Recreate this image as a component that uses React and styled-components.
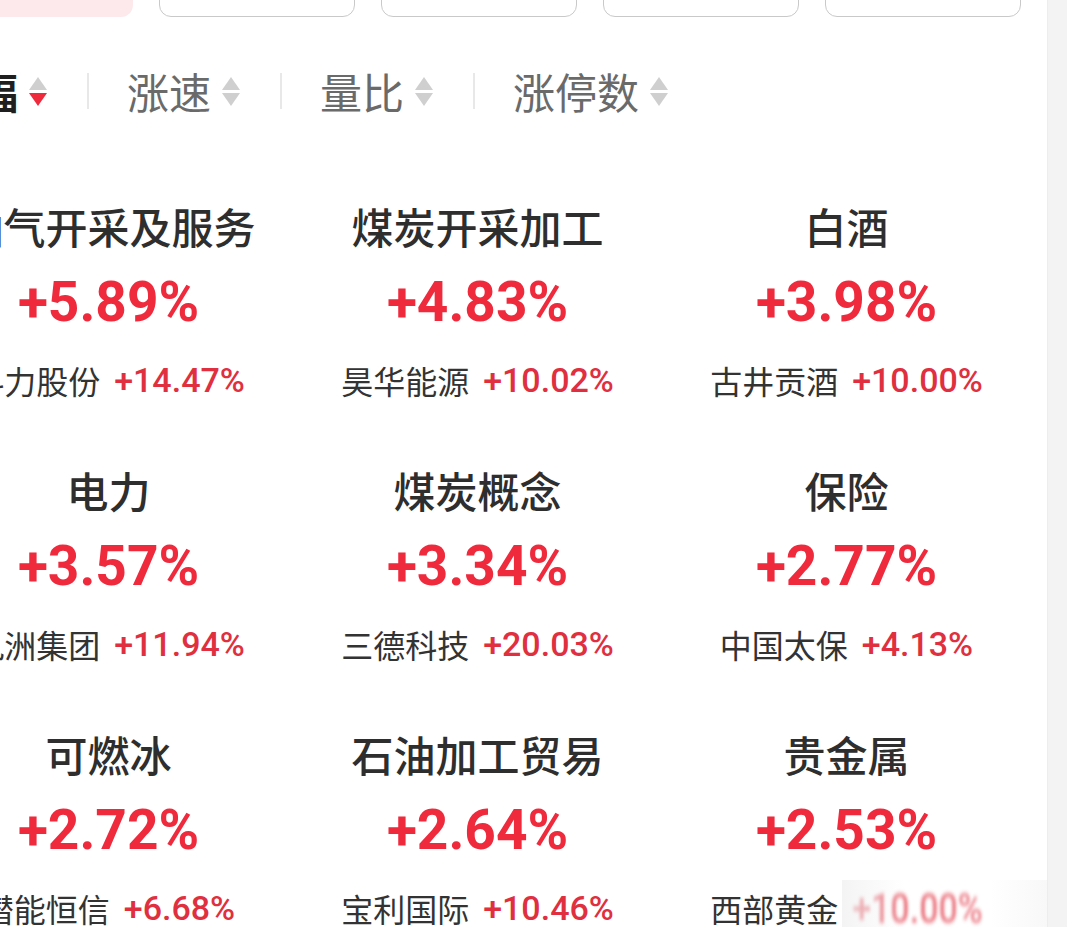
import React from 'react';
import styled, { createGlobalStyle, css } from 'styled-components';

const GlobalStyle = createGlobalStyle`
  html, body {
    margin: 0;
    padding: 0;
    background: #ffffff;
    overflow: hidden;
  }

  body {
    font-family: Roboto, "Noto Sans CJK SC", sans-serif;
    -webkit-font-smoothing: antialiased;
  }
`;

const Screen = styled.div`
  width: 1067px;
  height: 927px;
  display: flex;
  overflow: hidden;
`;

const Viewport = styled.div`
  flex: 1;
  overflow: hidden;
`;

const Scrollbar = styled.div`
  width: 19px;
  background: #f3f3f3;
  border-left: 1px solid #ededed;
`;

const Panel = styled.div`
  width: 1138px;
  margin-left: -90px;
`;

const ChipRow = styled.div`
  display: flex;
  gap: 26px;
  padding: 0 27px;
  margin-top: -40px;
`;

const Chip = styled.div`
  width: 196px;
  height: 57px;
  box-sizing: border-box;
  border-radius: 12px;
  border: 1.5px solid #c9c9c9;
  background: #ffffff;

  ${({ $active }) =>
    $active &&
    css`
      border-color: transparent;
      background: #fde9eb;
    `}
`;

const SortBar = styled.div`
  display: flex;
  align-items: center;
  height: 60px;
  margin-top: 44px;
  padding-left: 24px;
`;

const SortItem = styled.div`
  display: flex;
  align-items: center;
  gap: 11px;
`;

const SortLabel = styled.span`
  font-family: "Noto Sans CJK SC", sans-serif;
  font-size: 42px;
  line-height: 60px;
  color: ${({ $active }) => ($active ? '#1f1f1f' : '#6a6a6a')};
  font-weight: ${({ $active }) => ($active ? 700 : 400)};
`;

const Divider = styled.span`
  width: 2px;
  height: 36px;
  background: #e8e8e8;
  margin: 0 38px 0 40px;
`;

const ArrowStack = styled.span`
  display: flex;
  flex-direction: column;
  gap: 3px;
`;

const Grid = styled.div`
  display: grid;
  grid-template-columns: repeat(3, 369px);
  row-gap: 62px;
  padding: 0 14px;
  margin-top: 79px;
`;

const Card = styled.div`
  display: flex;
  flex-direction: column;
  align-items: center;
`;

const SectorName = styled.div`
  font-family: "Noto Sans CJK SC", sans-serif;
  font-size: 42px;
  line-height: 52px;
  font-weight: 500;
  color: #2e2e2e;
  white-space: nowrap;
`;

const SectorChange = styled.div`
  margin-top: 18px;
  font-family: Roboto, sans-serif;
  font-size: 55px;
  line-height: 64px;
  font-weight: 700;
  color: #ee2a3c;
`;

const LeaderRow = styled.div`
  position: relative;
  margin-top: 24px;
  display: flex;
  align-items: center;
  gap: 14px;
  white-space: nowrap;
`;

const LeaderName = styled.span`
  font-family: "Noto Sans CJK SC", sans-serif;
  font-size: 32px;
  line-height: 44px;
  color: #333333;
`;

const LeaderChange = styled.span`
  font-family: Roboto, sans-serif;
  font-size: 34px;
  line-height: 44px;
  font-weight: 500;
  color: #e0303f;

  ${({ $hazy }) =>
    $hazy &&
    css`
      filter: blur(1.6px);
      transform: scaleY(1.25);
      opacity: 0.85;
    `}
`;

const Haze = styled.span`
  position: absolute;
  left: 132px;
  right: -70px;
  top: -6px;
  bottom: -10px;
  background: linear-gradient(90deg, rgba(240, 240, 240, 0.75), rgba(255, 255, 255, 0.25) 30%, rgba(255, 255, 255, 0.3) 70%, rgba(245, 245, 245, 0.8));
`;

const sorts = [
  { label: '涨幅', active: true },
  { label: '涨速' },
  { label: '量比' },
  { label: '涨停数' },
];

const sectors = [
  { name: '油气开采及服务', change: '+5.89%', leader: '科力股份', leaderChange: '+14.47%' },
  { name: '煤炭开采加工', change: '+4.83%', leader: '昊华能源', leaderChange: '+10.02%' },
  { name: '白酒', change: '+3.98%', leader: '古井贡酒', leaderChange: '+10.00%' },
  { name: '电力', change: '+3.57%', leader: '九洲集团', leaderChange: '+11.94%' },
  { name: '煤炭概念', change: '+3.34%', leader: '三德科技', leaderChange: '+20.03%' },
  { name: '保险', change: '+2.77%', leader: '中国太保', leaderChange: '+4.13%' },
  { name: '可燃冰', change: '+2.72%', leader: '潜能恒信', leaderChange: '+6.68%' },
  { name: '石油加工贸易', change: '+2.64%', leader: '宝利国际', leaderChange: '+10.46%' },
  { name: '贵金属', change: '+2.53%', leader: '西部黄金', leaderChange: '+10.00%', hazy: true },
];

const SortArrows = ({ active }) => (
  <ArrowStack>
    <svg width="18" height="13" viewBox="0 0 18 13">
      <path d="M9 0 L18 13 L0 13 Z" fill="#cfcfcf" />
    </svg>
    <svg width="18" height="13" viewBox="0 0 18 13">
      <path d="M0 0 L18 0 L9 13 Z" fill={active ? '#ee2a3c' : '#cfcfcf'} />
    </svg>
  </ArrowStack>
);

const App = () => {
  return (
    <>
      <GlobalStyle />
      <Screen>
        <Viewport>
          <Panel>
            <ChipRow>
              <Chip $active />
              <Chip />
              <Chip />
              <Chip />
              <Chip />
            </ChipRow>

            <SortBar>
              {sorts.map((s, i) => (
                <React.Fragment key={s.label}>
                  {i > 0 && <Divider />}
                  <SortItem>
                    <SortLabel $active={s.active}>{s.label}</SortLabel>
                    <SortArrows active={s.active} />
                  </SortItem>
                </React.Fragment>
              ))}
            </SortBar>

            <Grid>
              {sectors.map((s) => (
                <Card key={s.name}>
                  <SectorName>{s.name}</SectorName>
                  <SectorChange>{s.change}</SectorChange>
                  <LeaderRow>
                    <LeaderName>{s.leader}</LeaderName>
                    <LeaderChange $hazy={s.hazy}>{s.leaderChange}</LeaderChange>
                    {s.hazy && <Haze />}
                  </LeaderRow>
                </Card>
              ))}
            </Grid>
          </Panel>
        </Viewport>
        <Scrollbar />
      </Screen>
    </>
  );
};

export default App;
